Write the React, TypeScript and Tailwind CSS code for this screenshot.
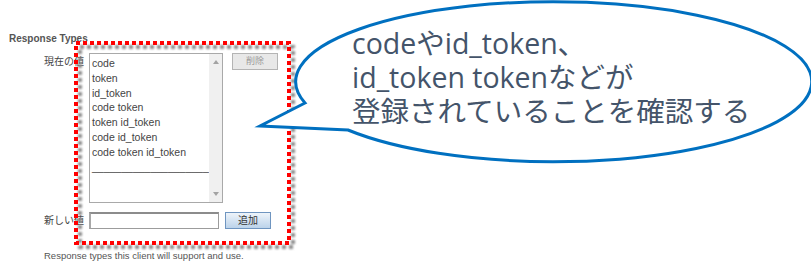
const items = [
  'code',
  'token',
  'id_token',
  'code token',
  'token id_token',
  'code id_token',
  'code token id_token',
  '____________________',
]

function Highlight() {
  return (
    <svg className="absolute left-0 top-0" width="811" height="276" viewBox="0 0 811 276">
      <defs>
        <filter id="soft" x="-5%" y="-5%" width="110%" height="110%">
          <feGaussianBlur stdDeviation="0.9" />
        </filter>
      </defs>
      <rect
        x="80"
        y="47"
        width="213"
        height="200"
        fill="none"
        stroke="#8a8a8a"
        strokeWidth="4"
        strokeDasharray="4 3"
        filter="url(#soft)"
      />
      <rect
        x="76"
        y="43"
        width="213"
        height="200"
        fill="none"
        stroke="#ff0000"
        strokeWidth="4"
        strokeDasharray="4 3"
      />
    </svg>
  )
}

function Callout() {
  return (
    <>
      <svg className="absolute left-0 top-0" width="811" height="276" viewBox="0 0 811 276">
        <path
          d="M 305 103 L 260 126 L 348 130 A 258 80 0 1 0 305 103 Z"
          fill="#ffffff"
          stroke="#0070c0"
          strokeWidth="3"
          strokeLinejoin="miter"
        />
      </svg>
      <div className="absolute left-[352px] top-[26px] font-['Open_Sans','Noto_Sans_CJK_JP',sans-serif] text-[28.5px] leading-[34px] text-[#44546a] whitespace-nowrap">
        <div>codeやid_token、</div>
        <div>id_token tokenなどが</div>
        <div>登録されていることを確認する</div>
      </div>
    </>
  )
}

export default function App() {
  return (
    <div className="relative w-[811px] h-[276px] overflow-hidden bg-white font-['Liberation_Sans','Noto_Sans_CJK_JP',sans-serif] text-[#444]">
      <div className="pt-[33px]">
        <div className="ml-[9px] text-[10px] leading-[12px] font-bold text-[#555]">Response Types</div>

        <div className="mt-[8px] pl-[44px] flex items-start">
          <div className="w-[45px] pt-[3px] text-[10px] leading-[12px]">現在の値</div>
          <div className="w-[134px] h-[150px] flex border border-[#a9a9a9] bg-white">
            <div className="flex-1 pl-[2px] pt-[2px] text-[10.5px] leading-[14.8px] text-[#444]">
              {items.map((item) => (
                <div key={item}>{item}</div>
              ))}
            </div>
            <div className="w-[13px] flex flex-col justify-between items-center bg-[#f0f0f0] py-[6px]">
              <span className="w-0 h-0 border-x-[3px] border-x-transparent border-b-[4px] border-b-[#a3a3a3]" />
              <span className="w-0 h-0 border-x-[3px] border-x-transparent border-t-[4px] border-t-[#a3a3a3]" />
            </div>
          </div>
          <button className="ml-[9px] w-[46px] h-[17px] border border-[#b4b4b4] bg-[#e8e8e8] text-[9px] leading-[15px] text-[#9a9a9a]">
            削除
          </button>
        </div>

        <div className="mt-[9px] pl-[44px] flex items-center">
          <div className="w-[45px] text-[10px] leading-[12px]">新しい値</div>
          <div className="w-[130px] h-[17px] border border-[#9c9c9c] border-t-2 border-l-2 border-t-[#8c8c8c] border-l-[#a8a8a8] bg-white" />
          <button className="ml-[6px] w-[46px] h-[17px] border border-[#6f95c0] bg-gradient-to-b from-[#eef4fa] to-[#bcd3ea] text-[10px] leading-[15px] text-[#333]">
            追加
          </button>
        </div>

        <div className="mt-[21px] ml-[44px] text-[9.5px] leading-[12px] text-[#555]">
          Response types this client will support and use.
        </div>
      </div>

      <Highlight />
      <Callout />
    </div>
  )
}
